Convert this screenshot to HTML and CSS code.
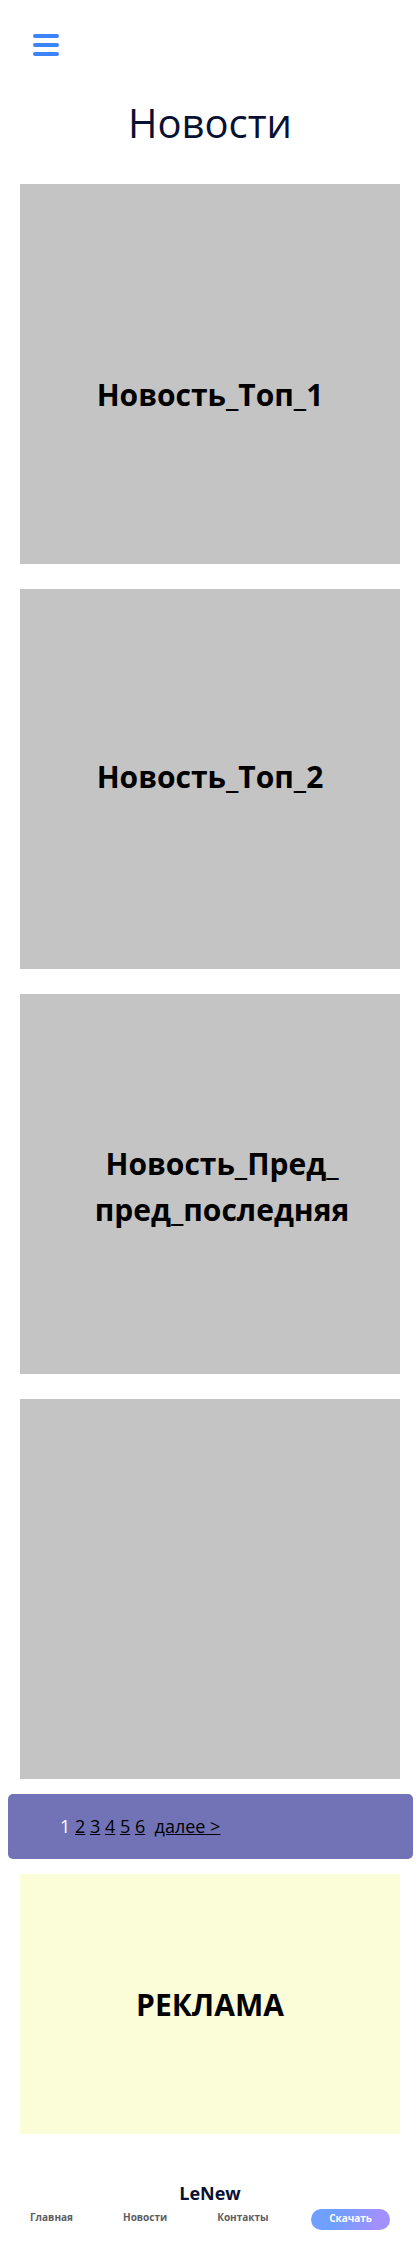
FILE: index.html
```
<!DOCTYPE html>
<html lang="ru">
<head>
  <meta charset="utf-8">
  <meta name="viewport" content="width=device-width, initial-scale=1">
  <title>LeNew</title>
  <link rel="stylesheet" href="styles.css">
</head>
<body>
  <header class="header">
    <button class="menu" type="button" aria-label="Меню">
      <span class="menu-line"></span>
      <span class="menu-line"></span>
      <span class="menu-line"></span>
    </button>
    <h1 class="title">Новости</h1>
  </header>
  <main>
    <section class="news">
      <article class="card card-first"><h2 class="card-title">Новость_Топ_1</h2></article>
      <article class="card card-second"><h2 class="card-title">Новость_Топ_2</h2></article>
      <article class="card card-third"><h2 class="card-title">Новость_Пред_<br>пред_последняя</h2></article>
      <article class="card"></article>
    </section>
    <nav class="pages" aria-label="Страницы">
      <span class="current">1</span>
      <a href="#">2</a>
      <a href="#">3</a>
      <a href="#">4</a>
      <a href="#">5</a>
      <a href="#">6</a>&nbsp;
      <a href="#">далее &gt;</a>
    </nav>
    <aside class="ad"><p class="card-title">РЕКЛАМА</p></aside>
  </main>
  <footer class="footer">
    <p class="brand">LeNew</p>
    <div class="footer-row">
      <nav class="links">
        <a href="#">Главная</a>
        <a href="#">Новости</a>
        <a href="#">Контакты</a>
      </nav>
      <button class="download" type="button">Скачать</button>
    </div>
  </footer>
</body>
</html>
```
FILE: styles.css
```
* {
  box-sizing: border-box;
}

body,
h1,
h2,
p {
  margin: 0;
}

body {
  background: #fff;
  color: #000;
  font-family: "Open Sans", "Noto Sans", sans-serif;
}

.header {
  padding: 34px 20px 0;
}

.menu {
  display: flex;
  flex-direction: column;
  gap: 5px;
  width: 26px;
  margin-left: 13px;
  padding: 0;
  border: 0;
  background: none;
}

.menu-line {
  width: 100%;
  height: 4px;
  border-radius: 2px;
  background: #3d83fc;
}

.title {
  padding: 39px 0 33px;
  color: #091133;
  font-size: 40px;
  font-weight: 400;
  line-height: 56px;
  text-align: center;
}

.news {
  display: flex;
  flex-direction: column;
  gap: 25px;
  padding: 0 20px;
}

.card {
  min-height: 380px;
  background: #c4c4c4;
}

.card-title {
  font-size: 30px;
  font-weight: 700;
  line-height: 46px;
  text-align: center;
}

.card-first {
  padding-top: 188px;
}

.card-second {
  padding-top: 165px;
}

.card-third {
  padding: 147px 0 0 24px;
}

.pages {
  margin: 15px 7px 15px 8px;
  padding: 20px 52px;
  border-radius: 5px;
  background: #7173b6;
  font-size: 18px;
  line-height: 25px;
}

.pages a {
  color: #000;
}

.current {
  color: #fff;
}

.ad {
  display: grid;
  place-items: center;
  min-height: 260px;
  margin: 0 20px;
  padding-top: 2px;
  background: #fbfdd9;
}

.footer {
  padding: 46px 30px 20px;
}

.brand {
  color: #091133;
  font-size: 18px;
  font-weight: 700;
  line-height: 26px;
  text-align: center;
}

.footer-row {
  display: flex;
  justify-content: space-between;
  align-items: flex-start;
  padding-top: 3px;
}

.links {
  display: flex;
  gap: 50px;
  font-size: 10px;
  font-weight: 700;
  line-height: 17px;
}

.links a {
  color: #5d5d62;
  text-decoration: none;
}

.download {
  padding: 2px 18px 4px;
  border: 0;
  border-radius: 11px;
  background: linear-gradient(105deg, #6f9fff 30%, #a390ff 85%);
  color: #fff;
  font-family: inherit;
  font-size: 10px;
  font-weight: 700;
  line-height: 15px;
}
```
